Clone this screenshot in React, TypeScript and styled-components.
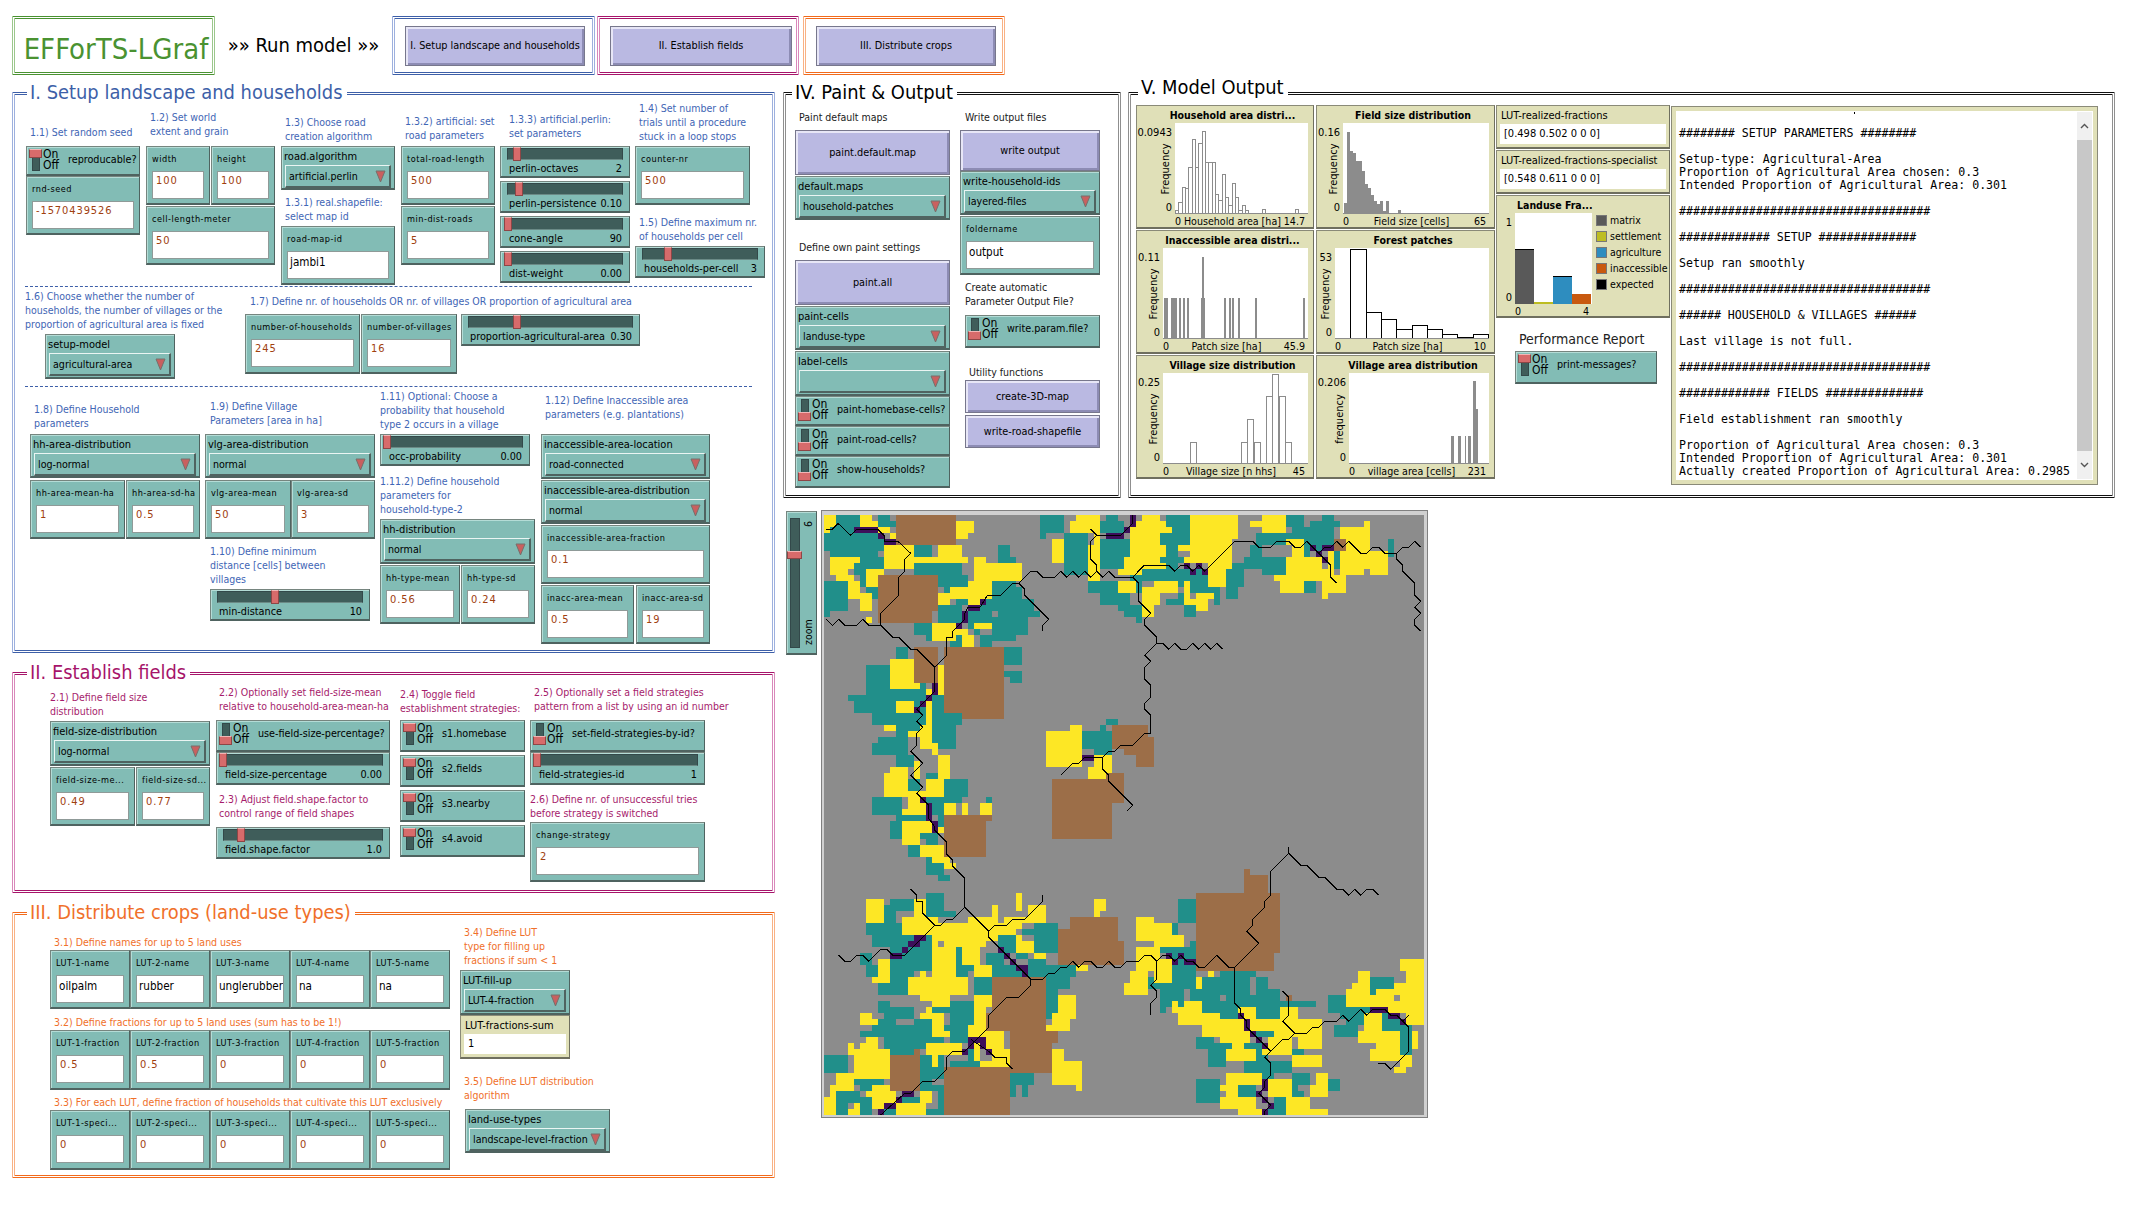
import React from 'react'
import styled, { createGlobalStyle, css } from 'styled-components'

const TAHOMA = `"DejaVu Sans Condensed", "DejaVu Sans", sans-serif`

const GlobalStyle = createGlobalStyle`
  html, body { margin: 0; padding: 0; background: #fff; }
  body { width: 2142px; height: 1230px; overflow: hidden; font-family: ${TAHOMA}; color: #000; }
`

type Size = { $w?: number; $h?: number; $ml?: number; $mt?: number }

const sized = css<Size>`
  box-sizing: border-box;
  flex: none;
  ${p => (p.$w ? `width: ${p.$w}px;` : '')}
  ${p => (p.$h ? `height: ${p.$h}px;` : '')}
  ${p => (p.$ml ? `margin-left: ${p.$ml}px;` : '')}
  ${p => (p.$mt ? `margin-top: ${p.$mt}px;` : '')}
`

const Page = styled.div`
  width: 2142px;
  height: 1230px;
  display: flex;
  flex-direction: column;
`

const TopBar = styled.div`
  display: flex;
  align-items: stretch;
  padding: 16px 0 0 12px;
  height: 59px;
`

const Frame = styled.div<Size & { $c: string; $side: string }>`
  ${sized}
  border-top: 3px double ${p => p.$c};
  border-bottom: 3px double ${p => p.$c};
  border-left: 3px double ${p => p.$side};
  border-right: 3px double ${p => p.$side};
`

const TitleFrame = styled(Frame)`
  display: flex;
  align-items: center;
  justify-content: center;
  color: #4a9231;
  font-size: 29px;
  padding: 6px 0 0 5px;
  white-space: nowrap;
`

const RunLabel = styled.div`
  width: 177px;
  flex: none;
  text-align: center;
  font-size: 20px;
  line-height: 59px;
`

const RunFrame = styled(Frame)`
  display: flex;
  align-items: center;
  padding-left: 10px;
`

const Main = styled.div`
  display: flex;
  margin-top: 17px;
  padding-left: 12px;
`

const LeftColumn = styled.div`
  width: 763px;
  flex: none;
  display: flex;
  flex-direction: column;
  gap: 19px;
`

const RightColumn = styled.div`
  margin-left: 8px;
  display: flex;
  flex-direction: column;
`

const TopPanels = styled.div`
  display: flex;
  gap: 7px;
`

const ViewRow = styled.div`
  display: flex;
  gap: 4px;
  margin-top: 12px;
  padding-left: 3px;
`

const Panel = styled(Frame)`
  position: relative;
`

const Heading = styled.div<{ $color: string; $top?: number; $left?: number }>`
  position: absolute;
  left: ${p => p.$left ?? 12}px;
  top: ${p => p.$top ?? -16}px;
  padding: 0 4px 0 3px;
  background: #fff;
  color: ${p => p.$color};
  font-size: 19.9px;
  line-height: 28px;
  white-space: nowrap;
`

const Row = styled.div<{ $gap?: number; $pl?: number; $pt?: number; $h?: number }>`
  display: flex;
  align-items: flex-start;
  gap: ${p => p.$gap ?? 0}px;
  padding-left: ${p => p.$pl ?? 0}px;
  padding-top: ${p => p.$pt ?? 0}px;
  ${p => (p.$h ? `height: ${p.$h}px;` : '')}
  box-sizing: border-box;
`

const Col = styled.div<{ $w?: number; $gap?: number; $ml?: number }>`
  display: flex;
  flex-direction: column;
  align-items: flex-start;
  flex: none;
  gap: ${p => p.$gap ?? 0}px;
  ${p => (p.$w ? `width: ${p.$w}px;` : '')}
  ${p => (p.$ml ? `margin-left: ${p.$ml}px;` : '')}
`

const Dashed = styled.div`
  width: 727px;
  margin-left: 10px;
  border-top: 1px dashed #3d5fa8;
`

const Note = styled.div<{ $h: number; $pb?: number; $pl?: number }>`
  box-sizing: border-box;
  height: ${p => p.$h}px;
  width: 100%;
  flex: none;
  display: flex;
  align-items: flex-end;
  padding-bottom: ${p => p.$pb ?? 3}px;
  padding-left: ${p => p.$pl ?? 0}px;
  font-size: 10.5px;
  line-height: 14px;
  white-space: pre;
`
const BlueNote = styled(Note)`color: #3f66b5;`
const PinkNote = styled(Note)`color: #a61c6c;`
const OrangeNote = styled(Note)`color: #f0702a;`
const BlackNote = styled(Note)`color: #1a1a1a;`

const Bevel = styled.div<Size>`
  ${sized}
  position: relative;
  background: #82bcb5;
  border: 1px solid #76857f;
  border-right-color: #4f6360;
  border-bottom: 2px solid #4f6360;
  box-shadow: inset 1px 1px 0 #b4dcd6;
`

const InputLabel = styled.div`
  height: 24px;
  line-height: 24px;
  padding-left: 5px;
  font-size: 9.1px;
  letter-spacing: 0.5px;
  white-space: nowrap;
  overflow: hidden;
`

const InputField = styled.div<{ $text?: boolean }>`
  box-sizing: border-box;
  margin: 0 5px;
  height: 28px;
  background: #fff;
  border: 1px solid #8f9a98;
  padding-left: 3px;
  white-space: nowrap;
  overflow: hidden;
  ${p => (p.$text
    ? 'color: #000; font-size: 11.6px; padding-left: 2px; line-height: 20px;'
    : 'color: #a0400f; font-size: 11px; letter-spacing: 0.9px; line-height: 18px;')}
`

const ChooserLabel = styled.div`
  height: 17px;
  line-height: 19px;
  padding-left: 2px;
  font-size: 11px;
  white-space: nowrap;
`

const ChooserField = styled.div`
  box-sizing: border-box;
  margin: 1px 3px 0 3px;
  height: 23px;
  display: flex;
  align-items: center;
  justify-content: space-between;
  padding: 0 3px 0 3px;
  font-size: 10.6px;
  white-space: nowrap;
  border: 1px solid #4f6360;
  border-top-color: #eaf5f3;
  border-left-color: #eaf5f3;
  border-right-width: 2px;
  border-bottom-width: 2px;
`

const SliderTrack = styled.div`
  margin: 1px 6px 0;
  height: 12px;
  background: #3f5d5a;
  border: 1px solid #33494a;
  border-bottom-color: #6b8a86;
  box-sizing: border-box;
`

const SliderHandle = styled.div<{ $pos: number }>`
  position: absolute;
  top: 0;
  left: ${p => p.$pos}px;
  width: 8px;
  height: 14px;
  box-sizing: border-box;
  background: #d76b6b;
  border: 1px solid #8d4646;
  border-top-color: #f2b5b5;
`

const SliderText = styled.div`
  display: flex;
  justify-content: space-between;
  padding: 0 7px 0 8px;
  height: 16px;
  line-height: 17px;
  font-size: 10.8px;
  white-space: nowrap;
`

const SwitchBox = styled(Bevel)`
  display: flex;
  align-items: flex-start;
`

const Groove = styled.div`
  position: relative;
  margin: 2px 0 0 5px;
  width: 8px;
  height: 22px;
  flex: none;
  background: #3f5d5a;
  border: 1px solid #33494a;
  box-sizing: border-box;
`

const Knob = styled.div<{ $on: boolean }>`
  position: absolute;
  left: -4px;
  ${p => (p.$on ? 'top: -1px;' : 'bottom: -1px;')}
  width: 13px;
  height: 9px;
  box-sizing: border-box;
  background: #d76b6b;
  border: 1px solid #8d4646;
  border-top-color: #f2b5b5;
`

const OnOff = styled.div`
  margin: 2px 0 0 3px;
  width: 22px;
  flex: none;
  font-size: 12px;
  line-height: 11px;
`

const SwitchLabel = styled.div`
  margin-left: 3px;
  font-size: 10.7px;
  line-height: 26px;
  white-space: nowrap;
`

const RunButton = styled.div<Size>`
  ${sized}
  display: flex;
  align-items: center;
  justify-content: center;
  background: #bab9e2;
  border: 1px solid #77778c;
  box-shadow: inset 2px 2px 0 #e7e6f6, inset -2px -2px 0 #8d8cb4;
  font-size: 10.8px;
  white-space: nowrap;
`

const MonitorBox = styled.div<Size>`
  ${sized}
  background: #e0e0b8;
  border: 1px solid #8a8a78;
  border-bottom-width: 2px;
  border-right-color: #6f6f5f;
  border-bottom-color: #6f6f5f;
`

const MonitorLabel = styled.div`
  height: 18px;
  line-height: 20px;
  padding-left: 4px;
  font-size: 11px;
  white-space: nowrap;
`

const MonitorValue = styled.div`
  margin: 0 3px;
  height: 20px;
  line-height: 20px;
  padding-left: 4px;
  background: #fff;
  font-size: 11px;
  white-space: nowrap;
`

const PlotBox = styled(MonitorBox)<{ $left: number; $area: number }>`
  display: grid;
  grid-template-columns: ${p => p.$left}px ${p => p.$area}px;
  grid-template-rows: 17px 91px 13px;
`

const PlotTitle = styled.div`
  grid-column: 1 / 3;
  text-align: center;
  padding-left: 20px;
  font-size: 10.5px;
  font-weight: bold;
  line-height: 19px;
  white-space: nowrap;
`

const PlotArea = styled.svg`
  display: block;
  background: #fff;
`

const YAxis = styled.div`
  position: relative;
  display: flex;
  flex-direction: column;
  justify-content: space-between;
  align-items: flex-end;
  padding: 3px 3px 0 0;
  font-size: 11px;
  line-height: 13px;
`

const YName = styled.div`
  position: absolute;
  right: 3px;
  top: 50%;
  writing-mode: vertical-rl;
  transform: translateY(-50%) rotate(180deg);
  font-size: 11px;
  line-height: 12px;
  white-space: nowrap;
`

const XAxis = styled.div`
  grid-column: 2;
  display: flex;
  justify-content: space-between;
  padding: 0 3px 0 0;
  font-size: 10.6px;
  line-height: 15px;
  white-space: nowrap;
`

const LanduseBox = styled(MonitorBox)`
  display: flex;
`

const LanduseChart = styled.div`
  display: grid;
  grid-template-columns: 18px 77px;
  grid-template-rows: 17px 91px 13px;
`

const LegendList = styled.div`
  margin: 16px 0 0 4px;
  display: flex;
  flex-direction: column;
`

const LegendRow = styled.div`
  display: flex;
  align-items: center;
  height: 16px;
  gap: 3px;
  font-size: 10.5px;
  white-space: nowrap;
`

const Swatch = styled.div<{ $c: string }>`
  width: 11px;
  height: 11px;
  box-sizing: border-box;
  background: ${p => p.$c};
  border: 1px solid #777;
`

const OutputBox = styled.div`
  box-sizing: border-box;
  width: 427px;
  height: 379px;
  margin-top: 1px;
  flex: none;
  display: flex;
  background: #fff;
  border: 1px solid #8a8a78;
  box-shadow: inset 0 0 0 4px #e0e0b8;
  padding: 5px;
`

const OutputText = styled.pre`
  position: relative;
  flex: 1;
  margin: 0;
  padding: 15px 0 0 2px;
  overflow: hidden;
  font-family: "DejaVu Sans Mono", monospace;
  font-size: 11.6px;
  line-height: 13px;

  &::before {
    content: '';
    position: absolute;
    top: 0;
    left: 177px;
    width: 1px;
    height: 2px;
    background: #000;
  }
`

const Scrollbar = styled.div`
  width: 15px;
  flex: none;
  display: flex;
  flex-direction: column;
  background: #f0f0f0;
`

const ScrollArrow = styled.div`
  height: 28px;
  display: flex;
  align-items: center;
  justify-content: center;
`

const ScrollThumb = styled.div`
  flex: 1;
  background: #c8c8c8;
`

const PerformanceTitle = styled.div`
  margin: 11px 0 1px 23px;
  height: 19px;
  font-size: 14px;
  line-height: 18px;
  color: #222;
  white-space: nowrap;
`

const ZoomSlider = styled(Bevel)`
  width: 31px;
  height: 144px;
  margin-top: 1px;
  display: flex;
  padding: 6px 0 5px 3px;
`

const ZoomTrack = styled.div`
  width: 11px;
  background: #3f5d5a;
  border: 1px solid #33494a;
  box-sizing: border-box;
`

const ZoomHandle = styled.div`
  position: absolute;
  left: 0;
  top: 39px;
  width: 15px;
  height: 8px;
  box-sizing: border-box;
  background: #d76b6b;
  border: 1px solid #8d4646;
  border-top-color: #f2b5b5;
`

const ZoomText = styled.div`
  flex: 1;
  display: flex;
  justify-content: space-between;
  writing-mode: vertical-rl;
  transform: rotate(180deg);
  font-size: 10.5px;
  line-height: 14px;
  padding: 3px 0;
  margin: 0 1px;
`

const ViewFrame = styled.div`
  box-sizing: border-box;
  width: 607px;
  height: 608px;
  flex: none;
  padding: 4px 3px 2px 2px;
  background: #d0d0d0;
  border: 1px solid #808080;
`

const MapCanvas = styled.svg`
  display: block;
  background: #8c8c8c;
`

const Arrow = () => (
  <svg width="11" height="14" viewBox="0 0 11 14">
    <polygon points="1,2 10,2 5.5,13" fill="#c9605f" stroke="#76706c" strokeWidth="1" />
  </svg>
)

type ChooserProps = { label: string; value?: string; w: number; h?: number; ml?: number; mt?: number }

const Chooser = ({ label, value, w, h = 44, ml, mt }: ChooserProps) => (
  <Bevel $w={w} $h={h} $ml={ml} $mt={mt}>
    <ChooserLabel>{label}</ChooserLabel>
    <ChooserField>
      <span>{value}</span>
      <Arrow />
    </ChooserField>
  </Bevel>
)

type InputProps = { label: string; value: string; w: number; h?: number; text?: boolean; mt?: number }

const Input = ({ label, value, w, h = 59, text, mt }: InputProps) => (
  <Bevel $w={w} $h={h} $mt={mt}>
    <InputLabel>{label}</InputLabel>
    <InputField $text={text}>{value}</InputField>
  </Bevel>
)

const Slider = ({ label, value, pos, w, h = 32, ml }: { label: string; value: string; pos: number; w: number; h?: number; ml?: number }) => (
  <Bevel $w={w} $h={h} $ml={ml}>
    <SliderTrack />
    <SliderHandle $pos={pos} />
    <SliderText>
      <span>{label}</span>
      <span>{value}</span>
    </SliderText>
  </Bevel>
)

const Switch = ({ label, on, w, h = 32, ml }: { label: string; on?: boolean; w: number; h?: number; ml?: number }) => (
  <SwitchBox $w={w} $h={h} $ml={ml}>
    <Groove><Knob $on={!!on} /></Groove>
    <OnOff>On<br />Off</OnOff>
    <SwitchLabel>{label}</SwitchLabel>
  </SwitchBox>
)

const Monitor = ({ label, value, w, h = 44 }: { label: string; value: string; w: number; h?: number }) => (
  <MonitorBox $w={w} $h={h}>
    <MonitorLabel>{label}</MonitorLabel>
    <MonitorValue>{value}</MonitorValue>
  </MonitorBox>
)

type PlotProps = {
  title: string; w: number; left: number; ymax: string; xname: string; xmax: string; yname?: string; children: React.ReactNode
}

const Plot = ({ title, w, left, ymax, xname, xmax, yname = 'Frequency', children }: PlotProps) => {
  const area = w - left - 7
  return (
    <PlotBox $w={w} $h={124} $left={left} $area={area}>
      <PlotTitle>{title}</PlotTitle>
      <YAxis>
        <span>{ymax}</span>
        <YName>{yname}</YName>
        <span>0</span>
      </YAxis>
      <PlotArea width={area} height="91" shapeRendering="crispEdges">
        {children}
      </PlotArea>
      <XAxis>
        <span>0</span><span>{xname}</span><span>{xmax}</span>
      </XAxis>
    </PlotBox>
  )
}

// histogram drawn from bin heights, px
const Bins = ({ heights, bin, start = 0, fill, stroke }: { heights: number[]; bin: number; start?: number; fill: string; stroke?: string }) => (
  <>
    {heights.map((v, i) => v > 0 && (
      <rect key={i} x={start + i * bin + 0.5} y={91 - v + 0.5} width={bin} height={v} fill={fill} stroke={stroke} />
    ))}
    <line x1="0" y1="90.5" x2="400" y2="90.5" stroke="#8c8c8c" />
  </>
)

const Spans = ({ items }: { items: number[][] }) => (
  <>
    {items.map(([a, b, h], i) => <rect key={i} x={a} y={91 - h} width={b - a} height={h} fill="#8c8c8c" />)}
    <line x1="0" y1="90.5" x2="400" y2="90.5" stroke="#8c8c8c" />
  </>
)

const householdBins = [4, 12, 27, 26, 47, 75, 47, 71, 83, 52, 52, 52, 20, 14, 40, 17, 9, 31, 17, 4, 9, 4, 0, 0, 0, 0, 5, 0, 0, 0, 0, 0, 0, 0, 0, 0, 5]
const fieldBins = [12, 83, 64, 62, 54, 54, 44, 31, 27, 20, 14, 11, 14, 4, 14, 2, 1, 2, 5, 2, 1, 1, 0, 1, 0, 1, 0, 0, 0, 0, 0, 1, 0, 0, 0, 0, 0, 0, 0, 0, 0, 1, 0, 0, 0, 0, 1]
const inaccessibleSpans = [[1, 5, 41], [8, 14, 41], [16, 18, 41], [20, 22, 41], [24, 26, 41], [38, 42, 41], [39, 41, 82], [61, 63, 41], [66, 68, 41], [69, 71, 41], [75, 77, 41], [92, 94, 41], [140, 142, 41]]
const forestBins = [90, 27, 20, 10, 14, 10, 5, 2, 5]
const villageBins = [[27, 22], [78, 22], [84, 45], [91, 22], [103, 68], [109, 90], [116, 68], [122, 22]]
const villageAreaSpans = [[102, 105, 28], [109, 112, 28], [116, 117, 28], [119, 122, 28], [124, 127, 83], [127, 129, 55]]

const outputText = `######## SETUP PARAMETERS ########

Setup-type: Agricultural-Area
Proportion of Agricultural Area chosen: 0.3
Intended Proportion of Agricultural Area: 0.301

####################################

############# SETUP ##############

Setup ran smoothly

####################################

###### HOUSEHOLD & VILLAGES ######

Last village is not full.

####################################

############# FIELDS ##############

Field establishment ran smoothly

Proportion of Agricultural Area chosen: 0.3
Intended Proportion of Agricultural Area: 0.301
Actually created Proportion of Agricultural Area: 0.2985`

// map layers, cell rects "x y w h" per quadrant (each quadrant is 50x50 cells)
const parse = (s: string, ox: number, oy: number) =>
  s.split(',').map(r => {
    const [x, y, w, h] = r.trim().split(' ').map(Number)
    return { x: (x + ox) * 18, y: (y + oy) * 18, w: w * 18, h: h * 18 }
  })

const teal = [
  ...parse('2 0 4 2,9 0 2 1,9 1 3 1,1 2 8 1,0 3 10 3,1 6 9 1,6 7 4 1,5 8 5 2,6 10 1 2,0 11 4 5,0 16 1 1,7 12 2 2,15 5 3 2,29 5 2 3,29 7 3 1,15 8 8 2,19 10 5 2,20 12 1 2,23 12 1 1,19 15 4 3,22 14 2 1,15 18 3 2,17 20 1 1,28 11 4 1,28 12 5 2,26 14 9 2,24 16 12 1,24 17 10 2,28 19 6 1,28 20 4 1,25 19 1 1,26 20 2 2,21 20 2 2,12 22 2 2,30 22 3 3,30 26 3 1,31 27 2 1,7 25 4 5,7 29 10 1,16 28 1 1,4 30 14 1,5 31 7 2,8 33 9 2,15 31 2 2,12 35 4 1,12 36 2 1,9 37 5 1,8 38 6 2,12 40 3 2,18 30 2 5,18 33 5 2,18 35 4 4,17 43 2 1,14 44 2 2,20 44 4 3,17 47 6 1,27 47 1 1,18 48 2 2,8 47 5 3,15 49 2 1,36 0 4 3,36 3 1 1,40 3 4 7,46 4 4 5,47 0 2 1,46 1 4 2,44 11 6 2,46 13 4 2,49 15 1 1,43 36 5 3,46 35 1 1,47 34 2 1,45 39 3 1', 0, 0),
  ...parse('7 0 4 2,8 2 3 1,6 3 5 2,7 5 2 2,6 7 4 1,7 8 2 1,0 4 1 3,3 9 11 1,1 10 13 1,2 11 1 2,11 11 3 2,9 11 1 1,0 13 1 2,0 15 3 2,2 17 1 1,7 14 3 1,9 13 1 1,10 15 2 2,15 12 1 3,14 12 2 1,17 9 3 3,17 12 2 2,18 8 4 1,20 7 7 2,23 9 4 1,21 5 2 2,22 3 6 2,27 0 3 2,31 1 5 1,33 0 2 1,28 2 7 1,22 3 13 1,28 4 7 1,31 5 4 1,30 5 1 2,32 7 1 1,35 6 1 3,30 11 2 2,44 4 1 3', 50, 0),
  ...parse('12 0 5 1,11 1 2 3,19 0 1 2,16 3 3 1,17 4 2 1,14 5 2 2,17 7 3 3,19 10 2 1,17 13 3 4,11 14 4 2,10 15 2 3,20 16 2 1,16 18 1 1,7 18 6 2,8 20 10 2,11 22 7 2,6 23 2 2,7 25 2 2,14 20 4 6,11 24 4 6,9 28 5 2,27 23 3 2,29 20 3 3,28 25 6 2,35 18 4 5,33 19 2 1,32 23 2 1,34 24 3 3,37 25 5 1,34 26 8 1,37 27 4 2,37 29 2 5,25 27 3 3,22 22 1 4,20 26 4 1,23 25 2 1,9 31 2 2,10 32 5 2,9 34 3 1,15 34 3 1,8 35 10 1,6 36 14 1,10 37 10 1,10 38 7 1,9 39 6 1,18 32 3 1,21 31 4 4,20 35 4 1,21 36 3 2,26 36 1 2,0 40 4 3,16 40 2 5,18 42 2 2,19 40 1 3,15 45 5 1,19 46 1 4,21 41 5 1,16 49 4 1,24 39 1 2,5 43 1 2,6 44 4 1,6 45 2 1,3 45 1 1,2 46 4 2,6 47 2 3,2 48 2 2,10 49 2 1,13 47 3 1,31 43 4 2,31 45 1 2,33 45 1 2', 0, 50),
  ...parse('9 14 3 4,8 18 1 2,6 22 6 1,11 21 1 1,8 23 4 4,4 27 8 2,6 29 4 3,6 32 1 1,16 26 6 1,13 27 9 2,22 27 2 2,11 29 15 2,13 31 19 1,13 32 14 1,16 33 3 1,22 33 4 1,34 30 4 3,36 33 4 1,37 34 3 1,35 35 4 2,38 32 4 1,41 27 4 2,41 29 1 1,43 33 3 3,46 35 2 5,23 35 2 1,22 36 3 1,12 37 3 1,12 38 6 1,14 39 3 3,20 38 3 2,27 39 3 1,22 40 2 1,20 41 8 2,20 43 5 1,27 41 1 1,28 43 3 2,28 45 1 1,28 46 2 1,12 44 4 4,19 45 3 3,34 44 2 2,25 47 2 3,24 49 2 1', 50, 50),
]

const yellow = [
  ...parse('0 0 2 2,0 2 1 1,6 0 2 2,6 1 3 1,9 2 2 1,11 3 1 1,10 5 5 4,13 7 11 1,19 5 4 2,22 1 3 2,22 3 2 1,1 7 5 1,1 8 4 1,1 9 3 1,2 10 3 1,4 11 2 3,7 9 3 3,6 13 2 3,7 10 2 2,7 17 1 1,25 7 2 6,25 8 8 3,24 11 4 3,21 12 3 2,19 13 2 2,24 14 2 1,25 18 3 1,18 18 4 3,21 19 3 1,23 20 2 2,11 24 4 5,11 28 5 1,19 25 1 5,17 29 1 1,12 31 3 2,17 31 1 8,16 35 2 4,14 36 2 1,10 35 2 1,18 38 1 2,19 40 2 4,15 41 1 3,11 42 3 1,10 43 4 4,17 44 3 3,14 46 3 4,13 49 2 1,20 48 2 2,23 48 1 2,26 48 2 2,38 4 2 4,42 0 4 1,41 1 5 2,44 5 2 6,45 3 1 2,49 9 1 1,49 11 1 2,37 36 6 6,41 35 2 1,45 40 3 2,44 42 3 2,46 40 2 3', 0, 0),
  ...parse('3 0 3 1,1 1 6 1,1 2 7 1,1 3 5 2,1 5 6 2,0 7 6 1,0 8 7 1,0 9 3 1,11 0 8 4,9 5 2 1,11 4 7 3,10 7 8 1,14 8 4 1,14 9 3 3,21 1 6 1,23 0 4 3,27 4 3 1,28 5 2 2,27 7 6 2,27 9 7 1,25 10 11 1,26 11 4 2,34 6 1 4,33 10 4 3,33 13 1 1,36 2 5 3,40 1 1 1,37 5 4 1,36 6 8 3,36 9 4 1,41 9 3 1,0 11 2 2,5 11 4 2,3 12 3 3,3 15 2 2,10 11 1 3,10 14 4 1,12 13 3 1,12 15 2 1', 50, 0),
  ...parse('13 1 5 2,13 3 3 2,19 2 1 1,16 5 4 2,18 7 3 1,20 8 2 1,7 14 3 4,15 14 2 3,13 17 6 3,19 18 8 4,24 17 4 1,28 15 1 3,26 18 3 2,18 20 8 2,18 22 4 5,23 22 3 3,25 25 3 2,14 27 10 3,16 26 1 1,16 30 5 1,18 31 3 1,17 32 1 1,16 33 4 1,18 34 2 3,19 36 2 1,25 30 3 2,25 32 2 3,24 35 3 2,32 13 1 3,34 15 3 3,30 17 4 1,29 18 4 1,27 19 5 1,27 20 2 1,32 20 2 1,32 21 3 2,35 23 2 1,45 14 2 2,45 16 1 1,42 25 2 1,9 24 2 3,8 27 3 1,39 30 3 4,38 33 3 1,37 35 4 1,38 34 3 1,6 33 2 2,8 34 1 1,17 38 6 2,18 40 1 2,27 36 3 3,25 38 1 3,27 39 4 1,26 41 5 1,28 40 3 1,4 38 1 2,6 38 3 1,7 37 2 1,4 39 7 1,5 40 6 4,2 43 3 3,1 45 2 1,0 47 2 3,1 46 1 1,4 45 1 1,8 45 3 1,7 46 5 1,8 47 4 2,12 48 5 2,16 46 2 2,4 49 2 1,5 48 1 1,38 39 2 3,38 41 5 4,42 45 1 1', 0, 50),
  ...parse('2 17 3 4,2 18 6 3,5 20 5 2,2 22 4 2,2 24 6 2,5 24 3 4,1 26 3 3,0 28 4 2,12 27 1 2,14 26 1 1,8 31 1 1,10 31 3 2,8 32 5 1,9 33 7 2,13 34 8 1,9 34 11 1,13 35 8 2,16 37 5 1,18 38 2 3,17 39 5 2,19 32 3 2,21 34 4 2,26 32 3 2,25 34 8 2,25 36 8 1,29 37 4 2,24 37 4 1,24 38 4 2,23 39 2 1,28 40 5 2,32 43 2 2,31 45 3 2,24 44 4 3,17 43 6 2,16 45 3 1,17 46 2 1,16 47 6 2,19 49 4 1,27 47 4 2,27 49 7 1,46 24 4 2,47 26 3 2,39 26 2 2,38 28 3 1,45 28 5 1,37 29 4 1,42 29 8 2,37 30 13 2,44 32 6 1,47 33 3 2,40 33 3 3,39 36 7 2,42 38 4 1,41 39 5 2,46 40 2 2,45 42 2 1,48 36 1 3', 50, 50),
]

const holes = [
  ...parse('28 16 1 1,26 19 2 1,9 6 1 1', 0, 0),
  ...parse('19 21 1 1,33 20 1 1', 0, 50),
  ...parse('21 27 1 3,16 30 1 1,45 30 1 1,4 26 1 1', 50, 50),
]

const brown = [
  ...parse('12 0 10 5,9 10 10 6,9 16 9 2,15 22 4 6,20 22 10 11,23 33 7 1,38 44 10 6,47 43 3 5,48 35 2 4', 0, 0),
  ...parse('0 35 4 3,0 37 5 3,2 40 3 2,35 4 2 2', 50, 0),
  ...parse('20 0 8 1,20 1 7 6,38 0 10 4,41 17 8 2,39 19 10 2,39 21 11 4,28 27 9 6,27 33 10 3,31 36 8 2,31 38 7 5,20 42 11 8,11 40 5 6,15 39 1 1', 0, 50),
  ...parse('20 9 1 1,20 10 4 3,12 13 14 10,12 23 13 3,27 30 1 1', 50, 50),
]

const purple = [
  ...parse('5 2 4 1,9 3 1 1,10 4 2 1,47 3 3 1,24 15 2 1,26 14 1 1,23 16 1 2,22 18 1 1,18 28 1 2,17 30 1 1,16 31 1 1,15 32 1 1,43 40 2 1,16 47 1 1,17 48 1 2', 0, 0),
  ...parse('1 0 1 2,0 2 1 1,10 8 1 1,11 9 1 1,12 8 1 1,13 9 1 1,31 5 1 1,32 6 1 1,33 5 2 1,33 7 1 1', 50, 0),
  ...parse('17 0 1 1,18 1 1 2,16 20 1 1,15 20 2 1,14 21 2 1,13 22 1 1,11 23 2 1,29 22 1 1,30 23 1 1,31 24 1 1,32 25 2 1,33 26 1 1,24 37 3 1,24 38 1 1,26 38 1 1,27 39 1 1,23 39 1 1,13 46 2 1,12 47 1 1,10 48 2 1,9 49 1 1', 0, 50),
  ...parse('7 23 1 1,8 24 1 1,9 23 1 1,10 24 2 1,19 33 1 1,20 34 1 2,21 36 1 1,22 37 1 1,23 38 1 1,41 32 3 1,44 33 2 1,46 34 1 1,23 44 1 2,22 46 1 1,23 47 1 1,24 48 1 1,23 49 1 1', 50, 50),
]

const road = (pts: string, ox = 0, oy = 0) =>
  pts.split(' ').map(p => {
    const [x, y] = p.split(',').map(Number)
    return `${x + ox},${y + oy}`
  }).join(' ')

const roads = [
  road('6,43 24,43 42,25 80,61 98,43 162,43 180,61 180,79 222,79 260,115 242,133 242,169 224,187 224,241 170,295 170,331'),
  road('170,331 134,331 116,313 98,331 62,331 44,313 26,331 6,313'),
  road('170,331 206,367 224,367 260,403 278,403 332,457 368,421 368,367 386,367 386,349 422,313 422,295 432,277 468,277 490,241 530,241 566,205 584,205'),
  road('584,205 620,169 638,169 656,187 692,187 710,169 728,187 746,169 764,187 782,169 800,187 818,169 836,187 854,169 872,187 926,187'),
  road('584,205 602,223 602,241 674,313 656,331 656,349'),
  road('332,457 332,529 296,565 278,583 296,601 278,619 296,637 278,655 278,691 260,709 296,745 278,763 260,781 296,817 278,835 296,853 314,871 314,910 332,935 332,946 368,982 368,1018 386,1036 386,1054 422,1090 422,1177'),
  road('800,43 818,61 800,79 800,133 818,151 818,169'),
  road('818,61 890,61 926,25 926,0'),
  road('710,781 746,745 764,745 782,727 836,727 836,763 854,781 854,799 900,845 926,871 908,889'),
  road('836,727 854,709 872,709 890,691 926,691 962,655 980,655 980,601 962,583 962,565 980,547 980,511 962,493 962,457 980,439 962,421 998,385 998,367 962,331 962,313 980,295 944,259 944,205 926,187'),
  road('98,385 116,385 134,403 152,385 170,403 188,403 206,385 224,403 242,385 260,403 278,385 296,403', 900),
  road('26,187 60,151 134,151 152,169 170,151 188,151 206,169 224,151 242,169 332,79 386,79 404,97 440,97 458,79 494,79 512,97 530,97 548,79 584,115 602,97 620,97 638,79 656,97 674,79 710,115 728,115 746,97 764,97 782,115 818,115 836,97 854,97 872,79 890,97', 900),
  road('584,115 620,151 620,187 638,205', 900),
  road('818,115 818,133 836,151 836,169 872,205 872,241 890,259 872,277 890,295 872,313 872,331 890,349', 900),
  road('422,277 386,313 368,313 350,331 332,331 296,295 296,259 278,259 278,241 260,223', 0, 900),
  road('422,277 494,349 512,331 548,331 566,313 602,313 656,259 656,241', 0, 900),
  road('494,349 494,367 620,493 620,511 584,547 548,547 494,601 494,637 440,691 422,709 386,709 368,727 368,763 332,799 296,799 260,835 242,835 170,900', 0, 900),
  road('332,331 278,385 242,421 206,421 188,403 170,403 134,439 116,421 98,421 80,439 62,439 44,421', 0, 900),
  road('440,673 494,709 512,727 548,727 548,745 566,763', 0, 900),
  road('620,493 656,493 674,475 692,475 710,457 728,457 746,439 764,457 782,439 800,439 818,457 836,457 854,439 872,457 890,457 908,439 944,439 962,421 980,421 998,439 1016,421 1034,421 1052,439 1070,421 1088,439 1106,439 1124,457 1142,457 1178,421 1214,457 1232,457', 0, 900),
  road('332,457 404,385 368,349 386,331 386,313 422,277 422,259 440,241 440,169 494,115 494,97', 900, 900),
  road('494,115 530,151 548,151 584,187 602,187 638,223 656,223 674,241 692,223 710,241 728,223 746,223 764,241', 900, 900),
  road('332,457 332,565 350,583 350,601 368,619 368,637 440,709 476,673 494,673 512,655 548,655 566,637 584,637 602,619 638,619 656,601 674,619 710,583 728,601 746,583 782,583 800,601 818,601 836,619 854,601', 900, 900),
  road('836,619 854,637 854,709 800,763 782,745 762,745', 900, 900),
  road('512,655 476,619 494,601 494,547 476,529', 900, 900),
  road('440,709 422,727 440,745 440,781 422,799 422,817 404,835 422,853 440,871 422,889 422,900', 900, 900),
  road('98,439 98,493 80,511 98,529 98,547 80,565 80,601', 900, 900),
]

const Layer = ({ items, fill }: { items: { x: number; y: number; w: number; h: number }[]; fill: string }) => (
  <g fill={fill} shapeRendering="crispEdges">
    {items.map((r, i) => <rect key={i} x={r.x} y={r.y} width={r.w} height={r.h} />)}
  </g>
)

const blue = { c: '#3d5fa8', side: '#9db0de' }
const pink = { c: '#a6146a', side: '#d988ba' }
const orange = { c: '#f26a1b', side: '#f9b184' }
const black = { c: '#111', side: '#8f8f8f' }
const green = { c: '#4a9231', side: '#9cc78c' }

const App = () => (
  <Page>
    <GlobalStyle />
    <TopBar>
      <TitleFrame $w={203} $c={green.c} $side={green.side}>EFForTS-LGraf</TitleFrame>
      <RunLabel>»» Run model »»</RunLabel>
      <RunFrame $w={203} $c={blue.c} $side={blue.side}>
        <RunButton $w={180} $h={40}>I. Setup landscape and households</RunButton>
      </RunFrame>
      <RunFrame $w={202} $ml={2} $c={pink.c} $side={pink.side}>
        <RunButton $w={182} $h={40}>II. Establish fields</RunButton>
      </RunFrame>
      <RunFrame $w={202} $ml={4} $c={orange.c} $side={orange.side}>
        <RunButton $w={180} $h={40}>III. Distribute crops</RunButton>
      </RunFrame>
    </TopBar>

    <Main>
      <LeftColumn>
        <Panel $h={561} $c={blue.c} $side={blue.side}>
          <Heading $color="#3d5fa8">I. Setup landscape and households</Heading>

          <Row $pl={11} $pt={5} $h={191}>
            <Col $w={114}>
              <BlueNote $h={46} $pb={7} $pl={4}>1.1) Set random seed</BlueNote>
              <Switch w={114} h={30} on label="reproducable?" />
              <Input w={114} label="rnd-seed" value="-1570439526" />
            </Col>
            <Col $w={129} $gap={1} $ml={6}>
              <BlueNote $h={45} $pb={7} $pl={4}>{'1.2) Set world\nextent and grain'}</BlueNote>
              <Row $gap={1}>
                <Input w={64} label="width" value="100" />
                <Input w={64} label="height" value="100" />
              </Row>
              <Input w={129} label="cell-length-meter" value="50" />
            </Col>
            <Col $w={114} $ml={6}>
              <BlueNote $h={46} $pl={4}>{'1.3) Choose road\ncreation algorithm'}</BlueNote>
              <Chooser w={114} label="road.algorithm" value="artificial.perlin" />
              <BlueNote $h={36} $pl={4}>{'1.3.1) real.shapefile:\nselect map id'}</BlueNote>
              <Input w={114} label="road-map-id" value="jambi1" text />
            </Col>
            <Col $w={94} $gap={1} $ml={6}>
              <BlueNote $h={45} $pl={4}>{'1.3.2) artificial: set\nroad parameters'}</BlueNote>
              <Input w={94} label="total-road-length" value="500" />
              <Input w={94} label="min-dist-roads" value="5" />
            </Col>
            <Col $w={130} $gap={3} $ml={5}>
              <BlueNote $h={43} $pl={9}>{'1.3.3) artificial.perlin:\nset parameters'}</BlueNote>
              <Slider w={130} label="perlin-octaves" value="2" pos={12} />
              <Slider w={130} label="perlin-persistence" value="0.10" pos={14} />
              <Slider w={130} label="cone-angle" value="90" pos={3} />
              <Slider w={130} label="dist-weight" value="0.00" pos={3} />
            </Col>
            <Col $w={130} $ml={5}>
              <BlueNote $h={46} $pl={4}>{'1.4) Set number of\ntrials until a procedure\nstuck in a loop stops'}</BlueNote>
              <Input w={115} label="counter-nr" value="500" />
              <BlueNote $h={41} $pl={4}>{'1.5) Define maximum nr.\nof households per cell'}</BlueNote>
              <Slider w={130} label="households-per-cell" value="3" pos={28} />
            </Col>
          </Row>
          <Dashed />

          <Row $pl={10} $h={99}>
            <Col $w={220}>
              <BlueNote $h={47} $pb={3}>{'1.6) Choose whether the number of\nhouseholds, the number of villages or the\nproportion of agricultural area is fixed'}</BlueNote>
              <Chooser w={130} h={45} ml={20} label="setup-model" value="agricultural-area" />
            </Col>
            <Col>
              <BlueNote $h={27} $pb={6} $pl={5}>1.7) Define nr. of households OR nr. of villages OR proportion of agricultural area</BlueNote>
              <Row $gap={1}>
                <Input w={115} h={60} label="number-of-households" value="245" />
                <Input w={96} h={60} label="number-of-villages" value="16" />
                <Slider w={179} ml={3} label="proportion-agricultural-area" value="0.30" pos={51} />
              </Row>
            </Col>
          </Row>
          <Dashed />

          <Row $pl={15}>
            <Col $w={170} $gap={2}>
              <BlueNote $h={45} $pb={2} $pl={4}>{'1.8) Define Household\nparameters'}</BlueNote>
              <Chooser w={170} label="hh-area-distribution" value="log-normal" />
              <Row $gap={1}>
                <Input w={95} label="hh-area-mean-ha" value="1" />
                <Input w={74} label="hh-area-sd-ha" value="0.5" />
              </Row>
            </Col>
            <Col $w={170} $ml={5}>
              <BlueNote $h={47} $pb={7} $pl={5}>{'1.9) Define Village\nParameters [area in ha]'}</BlueNote>
              <Chooser w={170} label="vlg-area-distribution" value="normal" />
              <Row $gap={0} $pt={2}>
                <Input w={86} label="vlg-area-mean" value="50" />
                <Input w={84} label="vlg-area-sd" value="3" />
              </Row>
              <BlueNote $h={50} $pl={5}>{'1.10) Define minimum\ndistance [cells] between\nvillages'}</BlueNote>
              <Slider w={160} ml={5} label="min-distance" value="10" pos={60} />
            </Col>
            <Col $w={155} $ml={5}>
              <BlueNote $h={47} $pb={3}>{'1.11) Optional: Choose a\nprobability that household\ntype 2 occurs in a village'}</BlueNote>
              <Slider w={150} label="occ-probability" value="0.00" pos={2} />
              <BlueNote $h={53}>{'1.11.2) Define household\nparameters for\nhousehold-type-2'}</BlueNote>
              <Chooser w={155} h={45} label="hh-distribution" value="normal" />
              <Row $gap={1} $pt={1}>
                <Input w={80} label="hh-type-mean" value="0.56" />
                <Input w={74} label="hh-type-sd" value="0.24" />
              </Row>
            </Col>
            <Col $w={169} $gap={1} $ml={6}>
              <BlueNote $h={46} $pb={12} $pl={4}>{'1.12) Define Inaccessible area\nparameters (e.g. plantations)'}</BlueNote>
              <Chooser w={169} h={45} label="inaccessible-area-location" value="road-connected" />
              <Chooser w={169} label="inaccessible-area-distribution" value="normal" />
              <Input w={169} label="inaccessible-area-fraction" value="0.1" />
              <Row $gap={2}>
                <Input w={93} label="inacc-area-mean" value="0.5" />
                <Input w={74} label="inacc-area-sd" value="19" />
              </Row>
            </Col>
          </Row>
        </Panel>

        <Panel $h={221} $c={pink.c} $side={pink.side}>
          <Heading $color="#a6146a">II. Establish fields</Heading>
          <Row $pl={35}>
            <Col $w={160} $gap={1}>
              <PinkNote $h={45} $pb={2}>{'2.1) Define field size\ndistribution'}</PinkNote>
              <Chooser w={160} h={45} label="field-size-distribution" value="log-normal" />
              <Row $gap={1}>
                <Input w={85} label="field-size-me..." value="0.49" />
                <Input w={74} label="field-size-sd..." value="0.77" />
              </Row>
            </Col>
            <Col $w={174} $ml={6}>
              <PinkNote $h={45} $pb={7} $pl={3}>{'2.2) Optionally set field-size-mean\nrelative to household-area-mean-ha'}</PinkNote>
              <Switch w={174} on={false} label="use-field-size-percentage?" />
              <Slider w={174} h={33} label="field-size-percentage" value="0.00" pos={2} />
              <PinkNote $h={42} $pb={7} $pl={3}>{'2.3) Adjust field.shape.factor to\ncontrol range of field shapes'}</PinkNote>
              <Slider w={174} label="field.shape.factor" value="1.0" pos={20} />
            </Col>
            <Col $w={125} $gap={3} $ml={10}>
              <PinkNote $h={42} $pb={2} $pl={0}>{'2.4) Toggle field\nestablishment strategies:'}</PinkNote>
              <Switch w={125} on label="s1.homebase" />
              <Switch w={125} on label="s2.fields" />
              <Switch w={125} on label="s3.nearby" />
              <Switch w={125} on label="s4.avoid" />
            </Col>
            <Col $w={175} $ml={5}>
              <PinkNote $h={45} $pb={7} $pl={4}>{'2.5) Optionally set a field strategies\npattern from a list by using an id number'}</PinkNote>
              <Switch w={175} label="set-field-strategies-by-id?" />
              <Slider w={175} h={33} label="field-strategies-id" value="1" pos={2} />
              <PinkNote $h={37} $pb={2}>{'2.6) Define nr. of unsuccessful tries\nbefore strategy is switched'}</PinkNote>
              <Input w={175} h={60} label="change-strategy" value="2" />
            </Col>
          </Row>
        </Panel>

        <Panel $h={266} $c={orange.c} $side={orange.side}>
          <Heading $color="#f0702a">III. Distribute crops (land-use types)</Heading>
          <Row $pl={35}>
            <Col $w={400}>
              <OrangeNote $h={35} $pb={1} $pl={4}>3.1) Define names for up to 5 land uses</OrangeNote>
              <Row>
                {['oilpalm', 'rubber', 'unglerubber', 'na', 'na'].map((v, i) => (
                  <Input key={i} w={80} label={`LUT-${i + 1}-name`} value={v} text />
                ))}
              </Row>
              <OrangeNote $h={21} $pb={1} $pl={4}>3.2) Define fractions for up to 5 land uses (sum has to be 1!)</OrangeNote>
              <Row>
                {['0.5', '0.5', '0', '0', '0'].map((v, i) => (
                  <Input key={i} w={80} h={60} label={`LUT-${i + 1}-fraction`} value={v} />
                ))}
              </Row>
              <OrangeNote $h={20} $pb={1} $pl={4}>3.3) For each LUT, define fraction of households that cultivate this LUT exclusively</OrangeNote>
              <Row>
                {[1, 2, 3, 4, 5].map(i => (
                  <Input key={i} w={80} h={60} label={`LUT-${i}-speci...`} value="0" />
                ))}
              </Row>
            </Col>
            <Col $w={150} $ml={10}>
              <OrangeNote $h={55} $pl={4}>{'3.4) Define LUT\ntype for filling up\nfractions if sum < 1'}</OrangeNote>
              <Chooser w={110} h={45} label="LUT-fill-up" value="LUT-4-fraction" />
              <Monitor w={110} label="LUT-fractions-sum" value="1" />
              <OrangeNote $h={50} $pb={7} $pl={4}>{'3.5) Define LUT distribution\nalgorithm'}</OrangeNote>
              <Chooser w={145} ml={5} label="land-use-types" value="landscape-level-fraction" />
            </Col>
          </Row>
        </Panel>
      </LeftColumn>

      <RightColumn>
        <TopPanels>
          <Panel $w={338} $h={406} $c={black.c} $side={black.side}>
            <Heading $color="#000" $left={6}>IV. Paint &amp; Output</Heading>
            <Row $pl={9}>
              <Col $w={155}>
                <BlackNote $h={35} $pb={6} $pl={4}>Paint default maps</BlackNote>
                <RunButton $w={155} $h={45}>paint.default.map</RunButton>
                <Chooser w={155} mt={1} label="default.maps" value="household-patches" />
                <BlackNote $h={40} $pb={6} $pl={4}>Define own paint settings</BlackNote>
                <RunButton $w={155} $h={45}>paint.all</RunButton>
                <Chooser w={155} mt={1} label="paint-cells" value="landuse-type" />
                <Chooser w={155} h={45} mt={1} label="label-cells" value="" />
                <Switch w={155} h={30} label="paint-homebase-cells?" />
                <Switch w={155} h={30} label="paint-road-cells?" />
                <Switch w={155} label="show-households?" />
              </Col>
              <Col $w={140} $ml={10}>
                <BlackNote $h={35} $pb={6} $pl={5}>Write output files</BlackNote>
                <RunButton $w={140} $h={41}>write output</RunButton>
                <Chooser w={140} label="write-household-ids" value="layered-files" />
                <Input w={140} mt={1} label="foldername" value="output" text />
                <BlackNote $h={40} $pb={7} $pl={5}>{'Create automatic\nParameter Output File?'}</BlackNote>
                <Switch w={135} h={33} ml={5} label="write.param.file?" />
                <BlackNote $h={32} $pb={1} $pl={9}>Utility functions</BlackNote>
                <Col $gap={2}>
                  <RunButton $w={135} $h={33} $ml={5}>create-3D-map</RunButton>
                  <RunButton $w={135} $h={33} $ml={5}>write-road-shapefile</RunButton>
                </Col>
              </Col>
            </Row>
          </Panel>

          <Panel $w={987} $h={406} $c={black.c} $side={black.side}>
            <Heading $color="#000" $top={-21} $left={7}>V. Model Output</Heading>
            <Row $pl={5} $pt={10} $gap={1}>
              <Col $gap={1}>
                <Row $gap={2}>
                  <Plot w={178} left={38} title="Household area distri..." ymax="0.0943" xname="Household area [ha]" xmax="14.7">
                    <Bins heights={householdBins} bin={3.33} fill="#fff" stroke="#8c8c8c" />
                  </Plot>
                  <Plot w={179} left={26} title="Field size distribution" ymax="0.16" xname="Field size [cells]" xmax="65">
                    <Bins heights={fieldBins} bin={3} fill="#8c8c8c" />
                  </Plot>
                </Row>
                <Row $gap={2}>
                  <Plot w={178} left={26} title="Inaccessible area distri..." ymax="0.11" xname="Patch size [ha]" xmax="45.9">
                    <Spans items={inaccessibleSpans} />
                  </Plot>
                  <Plot w={179} left={18} title="Forest patches" ymax="53" xname="Patch size [ha]" xmax="10">
                    <Bins heights={[0, ...forestBins]} bin={15.3} fill="#fff" stroke="#000" />
                  </Plot>
                </Row>
                <Row $gap={2}>
                  <Plot w={178} left={26} title="Village size distribution" ymax="0.25" xname="Village size [n hhs]" xmax="45">
                    {villageBins.map(([x, h], i) => (
                      <rect key={i} x={x + 0.5} y={91 - h + 0.5} width="6" height={h} fill="#fff" stroke="#8c8c8c" />
                    ))}
                    <line x1="0" y1="90.5" x2="400" y2="90.5" stroke="#8c8c8c" />
                  </Plot>
                  <Plot w={179} left={32} title="Village area distribution" ymax="0.206" xname="village area [cells]" xmax="231" yname="frequency">
                    <Spans items={villageAreaSpans} />
                  </Plot>
                </Row>
              </Col>
              <Col $w={174} $gap={1}>
                <Monitor w={174} label="LUT-realized-fractions" value="[0.498 0.502 0 0 0]" />
                <Monitor w={174} label="LUT-realized-fractions-specialist" value="[0.548 0.611 0 0 0]" />
                <LanduseBox $w={174} $h={123}>
                  <LanduseChart>
                    <PlotTitle>Landuse Fra...</PlotTitle>
                    <YAxis>
                      <span>1</span>
                      <span>0</span>
                    </YAxis>
                    <PlotArea width="77" height="91" shapeRendering="crispEdges">
                      <rect x="0" y="37" width="19" height="54" fill="#595959" />
                      <rect x="0" y="36" width="19" height="1" fill="#000" />
                      <rect x="19" y="89" width="19" height="2" fill="#bdbd22" />
                      <rect x="38" y="64" width="19" height="27" fill="#2e8dbf" />
                      <rect x="38" y="63" width="19" height="1" fill="#000" />
                      <rect x="57" y="81" width="19" height="10" fill="#c8590f" />
                    </PlotArea>
                    <XAxis>
                      <span>0</span><span>4</span>
                    </XAxis>
                  </LanduseChart>
                  <LegendList>
                    {[['#595959', 'matrix'], ['#bdbd22', 'settlement'], ['#2e8dbf', 'agriculture'], ['#c8590f', 'inaccessible'], ['#000', 'expected']].map(([c, t]) => (
                      <LegendRow key={t}><Swatch $c={c} />{t}</LegendRow>
                    ))}
                  </LegendList>
                </LanduseBox>
                <PerformanceTitle>Performance Report</PerformanceTitle>
                <Switch w={142} h={33} ml={19} on label="print-messages?" />
              </Col>
              <OutputBox>
                <OutputText>{outputText}</OutputText>
                <Scrollbar>
                  <ScrollArrow>
                    <svg width="9" height="6" viewBox="0 0 9 6"><path d="M1 5 L4.5 1.5 L8 5" fill="none" stroke="#555" strokeWidth="1.4" /></svg>
                  </ScrollArrow>
                  <ScrollThumb />
                  <ScrollArrow>
                    <svg width="9" height="6" viewBox="0 0 9 6"><path d="M1 1 L4.5 4.5 L8 1" fill="none" stroke="#555" strokeWidth="1.4" /></svg>
                  </ScrollArrow>
                </Scrollbar>
              </OutputBox>
            </Row>
          </Panel>
        </TopPanels>

        <ViewRow>
          <ZoomSlider>
            <ZoomTrack />
            <ZoomHandle />
            <ZoomText><span>zoom</span><span>6</span></ZoomText>
          </ZoomSlider>
          <ViewFrame>
            <MapCanvas width="600" height="600" viewBox="0 0 1800 1800">
              <Layer items={teal} fill="#218f8a" />
              <Layer items={yellow} fill="#fde725" />
              <Layer items={holes} fill="#8c8c8c" />
              <Layer items={brown} fill="#9c6e48" />
              <Layer items={purple} fill="#3d0f5a" />
              <g fill="none" stroke="#000" strokeWidth="3" shapeRendering="crispEdges">
                {roads.map((p, i) => <polyline key={i} points={p} />)}
              </g>
            </MapCanvas>
          </ViewFrame>
        </ViewRow>
      </RightColumn>
    </Main>
  </Page>
)

export default App
